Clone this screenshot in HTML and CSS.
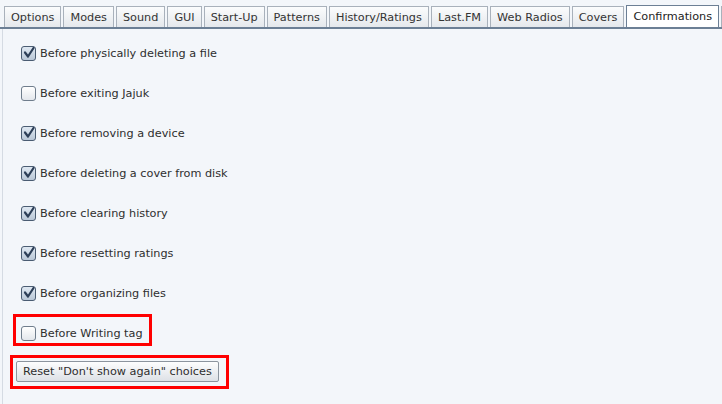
FILE: index.html
```html
<!DOCTYPE html>
<html>
<head>
<meta charset="utf-8">
<link rel="stylesheet" href="styles.css">
</head>
<body>
<div class="window">
  <div class="tabs">
    <div class="tab">Options</div>
    <div class="tab">Modes</div>
    <div class="tab">Sound</div>
    <div class="tab">GUI</div>
    <div class="tab">Start-Up</div>
    <div class="tab">Patterns</div>
    <div class="tab">History/Ratings</div>
    <div class="tab">Last.FM</div>
    <div class="tab">Web Radios</div>
    <div class="tab">Covers</div>
    <div class="tab active">Confirmations</div>
    <div class="tab stub"></div>
  </div>
  <div class="panel">
    <div class="row"><span class="cb checked"><svg viewBox="0 0 14 14" width="14" height="14"><path d="M3 6.5 L6 10.5 L11.5 2" fill="none" stroke="#2c3e57" stroke-width="2.2" stroke-linejoin="round" stroke-linecap="round"/></svg></span><span class="lbl">Before physically deleting a file</span></div>
    <div class="row"><span class="cb"></span><span class="lbl">Before exiting Jajuk</span></div>
    <div class="row"><span class="cb checked"><svg viewBox="0 0 14 14" width="14" height="14"><path d="M3 6.5 L6 10.5 L11.5 2" fill="none" stroke="#2c3e57" stroke-width="2.2" stroke-linejoin="round" stroke-linecap="round"/></svg></span><span class="lbl">Before removing a device</span></div>
    <div class="row"><span class="cb checked"><svg viewBox="0 0 14 14" width="14" height="14"><path d="M3 6.5 L6 10.5 L11.5 2" fill="none" stroke="#2c3e57" stroke-width="2.2" stroke-linejoin="round" stroke-linecap="round"/></svg></span><span class="lbl">Before deleting a cover from disk</span></div>
    <div class="row"><span class="cb checked"><svg viewBox="0 0 14 14" width="14" height="14"><path d="M3 6.5 L6 10.5 L11.5 2" fill="none" stroke="#2c3e57" stroke-width="2.2" stroke-linejoin="round" stroke-linecap="round"/></svg></span><span class="lbl">Before clearing history</span></div>
    <div class="row"><span class="cb checked"><svg viewBox="0 0 14 14" width="14" height="14"><path d="M3 6.5 L6 10.5 L11.5 2" fill="none" stroke="#2c3e57" stroke-width="2.2" stroke-linejoin="round" stroke-linecap="round"/></svg></span><span class="lbl">Before resetting ratings</span></div>
    <div class="row"><span class="cb checked"><svg viewBox="0 0 14 14" width="14" height="14"><path d="M3 6.5 L6 10.5 L11.5 2" fill="none" stroke="#2c3e57" stroke-width="2.2" stroke-linejoin="round" stroke-linecap="round"/></svg></span><span class="lbl">Before organizing files</span></div>
    <div class="row highlight"><span class="cb"></span><span class="lbl">Before Writing tag</span></div>
    <div class="btnwrap"><button class="btn">Reset "Don't show again" choices</button></div>
  </div>
</div>
</body>
</html>
```
FILE: styles.css
```css
html, body {
  margin: 0;
  padding: 0;
  background: #f3f6fa;
  width: 722px;
  height: 404px;
  overflow: hidden;
  font-family: "DejaVu Sans", sans-serif;
  font-size: 11.25px;
  color: #2e2e2e;
}
.window {
  display: flex;
  flex-direction: column;
  height: 404px;
}
.tabs {
  display: flex;
  gap: 2px;
  padding: 6px 0 0 4px;
  height: 21px;
  border-bottom: 2px solid #6c7f95;
  overflow: hidden;
}
.tab {
  height: 20px;
  padding: 0 6px;
  line-height: 21px;
  border: 1px solid #a9b1bb;
  border-bottom: none;
  background: linear-gradient(#fbfcfd, #e5e8ec);
  color: #333;
  white-space: nowrap;
}
.tab.active {
  margin-top: -1px;
  height: 22px;
  background: #fff;
  border-color: #6c7f95;
  color: #222;
}
.tab.stub {
  flex: 1;
  padding: 0;
}
.panel {
  flex: 1;
  margin-left: 2px;
  border-left: 1px solid #d5dbe3;
  padding: 14px 0 0 18px;
  display: flex;
  flex-direction: column;
  align-items: flex-start;
}
.row {
  display: flex;
  align-items: center;
  height: 20px;
  margin-bottom: 20px;
  gap: 4px;
}
.cb {
  width: 13px;
  height: 13px;
  border: 1px solid #6f7d8c;
  border-radius: 3px;
  background: linear-gradient(#ffffff, #e3e7ec);
  position: relative;
}
.cb.checked {
  background: linear-gradient(#dfe8f2, #b9c7d6);
  border-color: #4a5c72;
}
.cb svg {
  position: absolute;
  left: 0;
  top: -1px;
}
.row.highlight {
  outline: 3px solid #ff0000;
  margin-top: -6px;
  margin-left: -5px;
  padding: 6px 6px 0 5px;
  margin-bottom: 12px;
}
.btnwrap {
  margin-left: -11px;
  border: 3px solid #ff0000;
  padding: 3px 7px 4px 3px;
}
.btn {
  display: block;
  font-family: "DejaVu Sans", sans-serif;
  font-size: 11.25px;
  color: #2e2e2e;
  height: 21px;
  padding: 0 6px;
  border: 1px solid #8c949e;
  border-radius: 2px;
  background: linear-gradient(#fdfdfe, #dde1e6);
}
```
